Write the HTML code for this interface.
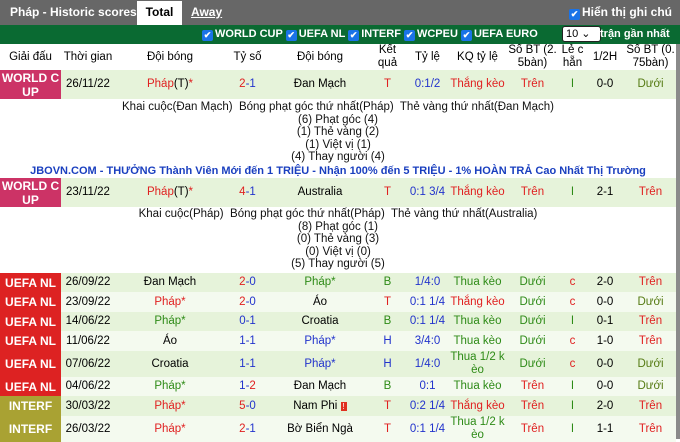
<!DOCTYPE html><html><head><meta charset="utf-8"><style>
body{margin:0;width:680px;height:439px;overflow:hidden;background:#fff;font-family:"Liberation Sans",Arial,sans-serif;font-size:11.5px;position:relative}
.top{position:absolute;left:0;top:0;width:680px;height:25px;background:#676767}
.top .t{position:absolute;top:5px;color:#fff;font-weight:bold;font-size:12px;white-space:nowrap}
.tab{position:absolute;left:137px;top:1px;width:45px;height:24px;background:#fff;color:#000;font-weight:bold;font-size:12px;text-align:center;line-height:22px}
.cb{display:inline-block;width:11px;height:11px;background:#1a73e8;border-radius:2px;color:#fff;font-size:9px;line-height:11px;text-align:center;vertical-align:-1px;margin-right:2px}
.green{position:absolute;left:0;top:25px;width:680px;height:19px;background:#0a6a32;color:#fff;font-weight:bold;font-size:11px}
.green span.i{position:absolute;top:3px;white-space:nowrap}
.sel{position:absolute;left:562px;top:1px;width:34px;height:14px;background:#fff;border:1px solid #222;border-radius:3px;color:#000;font-size:11px;font-weight:normal;line-height:14px;padding-left:3px;box-sizing:content-box}
table{position:absolute;left:0;border-collapse:collapse;table-layout:fixed;width:676px}
td{text-align:center;padding:0;white-space:nowrap;overflow:hidden;line-height:13px}
.hd td{height:26px;color:#000;font-size:11.5px;white-space:normal;line-height:13px}
.lg{color:#fff;font-weight:bold;font-size:12px;white-space:normal;line-height:14px}
.wc{background:#cc3366}.nl{background:#dd2222}.it{background:#a9a233}
.r{color:#e02020}.b{color:#2233cc}.g{color:#2e8b17}.k{color:#000}.dg{color:#557a12}
.a{background:#e6f3da}.c{background:#f4faef}
.det{position:absolute;left:0;width:676px;text-align:center;font-size:11.5px;line-height:12.5px;color:#111}
.jb{position:absolute;left:0;top:165px;width:676px;text-align:center;color:#1a3fbf;font-weight:bold;font-size:11px;white-space:nowrap}
.edge{position:absolute;left:676px;top:44px;width:4px;height:395px;background:#8a8a8a}
</style></head><body>
<div class="top"><span class="t" style="left:10px">Pháp - Historic scores</span><div class="tab">Total</div><span class="t" style="left:191px;text-decoration:underline">Away</span><span class="t" style="left:569px;top:5px"><span class="cb">✔</span>Hiển thị ghi chú</span></div>
<div class="green">
<span class="i" style="left:202px"><span class="cb">✔</span>WORLD CUP <span class="cb">✔</span>UEFA NL <span class="cb">✔</span>INTERF <span class="cb">✔</span>WCPEU <span class="cb">✔</span>UEFA EURO</span>
<span class="sel">10 ⌄</span><span class="i" style="left:600px">trận gần nhất</span></div>
<div class="edge"></div>
<table style="top:44px">
<colgroup><col style="width:61px"><col style="width:54px"><col style="width:110px"><col style="width:45px"><col style="width:100px"><col style="width:35px"><col style="width:45px"><col style="width:55px"><col style="width:55px"><col style="width:25px"><col style="width:40px"><col style="width:51px"></colgroup>
<tr class="hd"><td>Giải đấu</td><td>Thời gian</td><td>Đội bóng</td><td>Tỷ số</td><td>Đội bóng</td><td>Kết quả</td><td>Tỷ lệ</td><td>KQ tỷ lệ</td><td>Số BT (2. 5bàn)</td><td>Lẻ c hẵn</td><td>1/2H</td><td>Số BT (0. 75bàn)</td></tr>
<tr class="a" style="height:29px"><td class="lg wc">WORLD C UP</td><td class="k">26/11/22</td><td class="r">Pháp<span class="k">(T)</span>*</td><td><span class="r">2</span><span class="b">-1</span></td><td class="k">Đan Mạch</td><td class="r">T</td><td class="b">0:1/2</td><td class="r">Thắng kèo</td><td class="r">Trên</td><td class="g">I</td><td class="k">0-0</td><td class="dg">Dưới</td></tr>
</table>
<div class="det" style="top:101px">Khai cuộc(Đan Mạch)&nbsp; Bóng phạt góc thứ nhất(Pháp)&nbsp; Thẻ vàng thứ nhất(Đan Mạch)<br>(6) Phạt góc (4)<br>(1) Thẻ vàng (2)<br>(1) Việt vị (1)<br>(4) Thay người (4)</div>
<div class="jb">JBOVN.COM - THƯỞNG Thành Viên Mới đến 1 TRIỆU - Nhận 100% đến 5 TRIỆU - 1% HOÀN TRẢ Cao Nhất Thị Trường</div>
<table style="top:178px">
<colgroup><col style="width:61px"><col style="width:54px"><col style="width:110px"><col style="width:45px"><col style="width:100px"><col style="width:35px"><col style="width:45px"><col style="width:55px"><col style="width:55px"><col style="width:25px"><col style="width:40px"><col style="width:51px"></colgroup>
<tr class="a" style="height:29px"><td class="lg wc">WORLD C UP</td><td class="k">23/11/22</td><td class="r">Pháp<span class="k">(T)</span>*</td><td><span class="r">4</span><span class="b">-1</span></td><td class="k">Australia</td><td class="r">T</td><td class="b">0:1 3/4</td><td class="r">Thắng kèo</td><td class="r">Trên</td><td class="g">I</td><td class="k">2-1</td><td class="r">Trên</td></tr>
</table>
<div class="det" style="top:208px">Khai cuộc(Pháp)&nbsp; Bóng phạt góc thứ nhất(Pháp)&nbsp; Thẻ vàng thứ nhất(Australia)<br>(8) Phạt góc (1)<br>(0) Thẻ vàng (3)<br>(0) Việt vị (0)<br>(5) Thay người (5)</div>
<table style="top:273px">
<colgroup><col style="width:61px"><col style="width:54px"><col style="width:110px"><col style="width:45px"><col style="width:100px"><col style="width:35px"><col style="width:45px"><col style="width:55px"><col style="width:55px"><col style="width:25px"><col style="width:40px"><col style="width:51px"></colgroup>
<tr class="a" style="height:19px"><td class="lg nl">UEFA NL</td><td class="k">26/09/22</td><td class="k">Đan Mạch</td><td><span class="r">2</span><span class="b">-0</span></td><td class="g">Pháp*</td><td class="g">B</td><td class="b">1/4:0</td><td class="g">Thua kèo</td><td class="g">Dưới</td><td class="r">c</td><td class="k">2-0</td><td class="r">Trên</td></tr>
<tr class="c" style="height:20px"><td class="lg nl">UEFA NL</td><td class="k">23/09/22</td><td class="r">Pháp*</td><td><span class="r">2</span><span class="b">-0</span></td><td class="k">Áo</td><td class="r">T</td><td class="b">0:1 1/4</td><td class="r">Thắng kèo</td><td class="g">Dưới</td><td class="r">c</td><td class="k">0-0</td><td class="dg">Dưới</td></tr>
<tr class="a" style="height:19px"><td class="lg nl">UEFA NL</td><td class="k">14/06/22</td><td class="g">Pháp*</td><td><span class="b">0-1</span></td><td class="k">Croatia</td><td class="g">B</td><td class="b">0:1 1/4</td><td class="g">Thua kèo</td><td class="g">Dưới</td><td class="g">I</td><td class="k">0-1</td><td class="r">Trên</td></tr>
<tr class="c" style="height:20px"><td class="lg nl">UEFA NL</td><td class="k">11/06/22</td><td class="k">Áo</td><td class="b">1-1</td><td class="b">Pháp*</td><td class="b">H</td><td class="b">3/4:0</td><td class="g">Thua kèo</td><td class="g">Dưới</td><td class="r">c</td><td class="k">1-0</td><td class="r">Trên</td></tr>
<tr class="a" style="height:26px"><td class="lg nl">UEFA NL</td><td class="k">07/06/22</td><td class="k">Croatia</td><td class="b">1-1</td><td class="b">Pháp*</td><td class="b">H</td><td class="b">1/4:0</td><td class="g">Thua 1/2 k<br>èo</td><td class="g">Dưới</td><td class="r">c</td><td class="k">0-0</td><td class="dg">Dưới</td></tr>
<tr class="c" style="height:19px"><td class="lg nl">UEFA NL</td><td class="k">04/06/22</td><td class="g">Pháp*</td><td><span class="b">1-</span><span class="r">2</span></td><td class="k">Đan Mạch</td><td class="g">B</td><td class="b">0:1</td><td class="g">Thua kèo</td><td class="r">Trên</td><td class="g">I</td><td class="k">0-0</td><td class="dg">Dưới</td></tr>
<tr class="a" style="height:20px"><td class="lg it">INTERF</td><td class="k">30/03/22</td><td class="r">Pháp*</td><td><span class="r">5</span><span class="b">-0</span></td><td class="k">Nam Phi <span style="background:#e03020;color:#fff;font-size:8px;padding:0 2px">!</span></td><td class="r">T</td><td class="b">0:2 1/4</td><td class="r">Thắng kèo</td><td class="r">Trên</td><td class="g">I</td><td class="k">2-0</td><td class="r">Trên</td></tr>
<tr class="c" style="height:24px"><td class="lg it">INTERF</td><td class="k">26/03/22</td><td class="r">Pháp*</td><td><span class="r">2</span><span class="b">-1</span></td><td class="k">Bờ Biển Ngà</td><td class="r">T</td><td class="b">0:1 1/4</td><td class="g">Thua 1/2 k<br>èo</td><td class="r">Trên</td><td class="g">I</td><td class="k">1-1</td><td class="r">Trên</td></tr>
</table>
</body></html>
